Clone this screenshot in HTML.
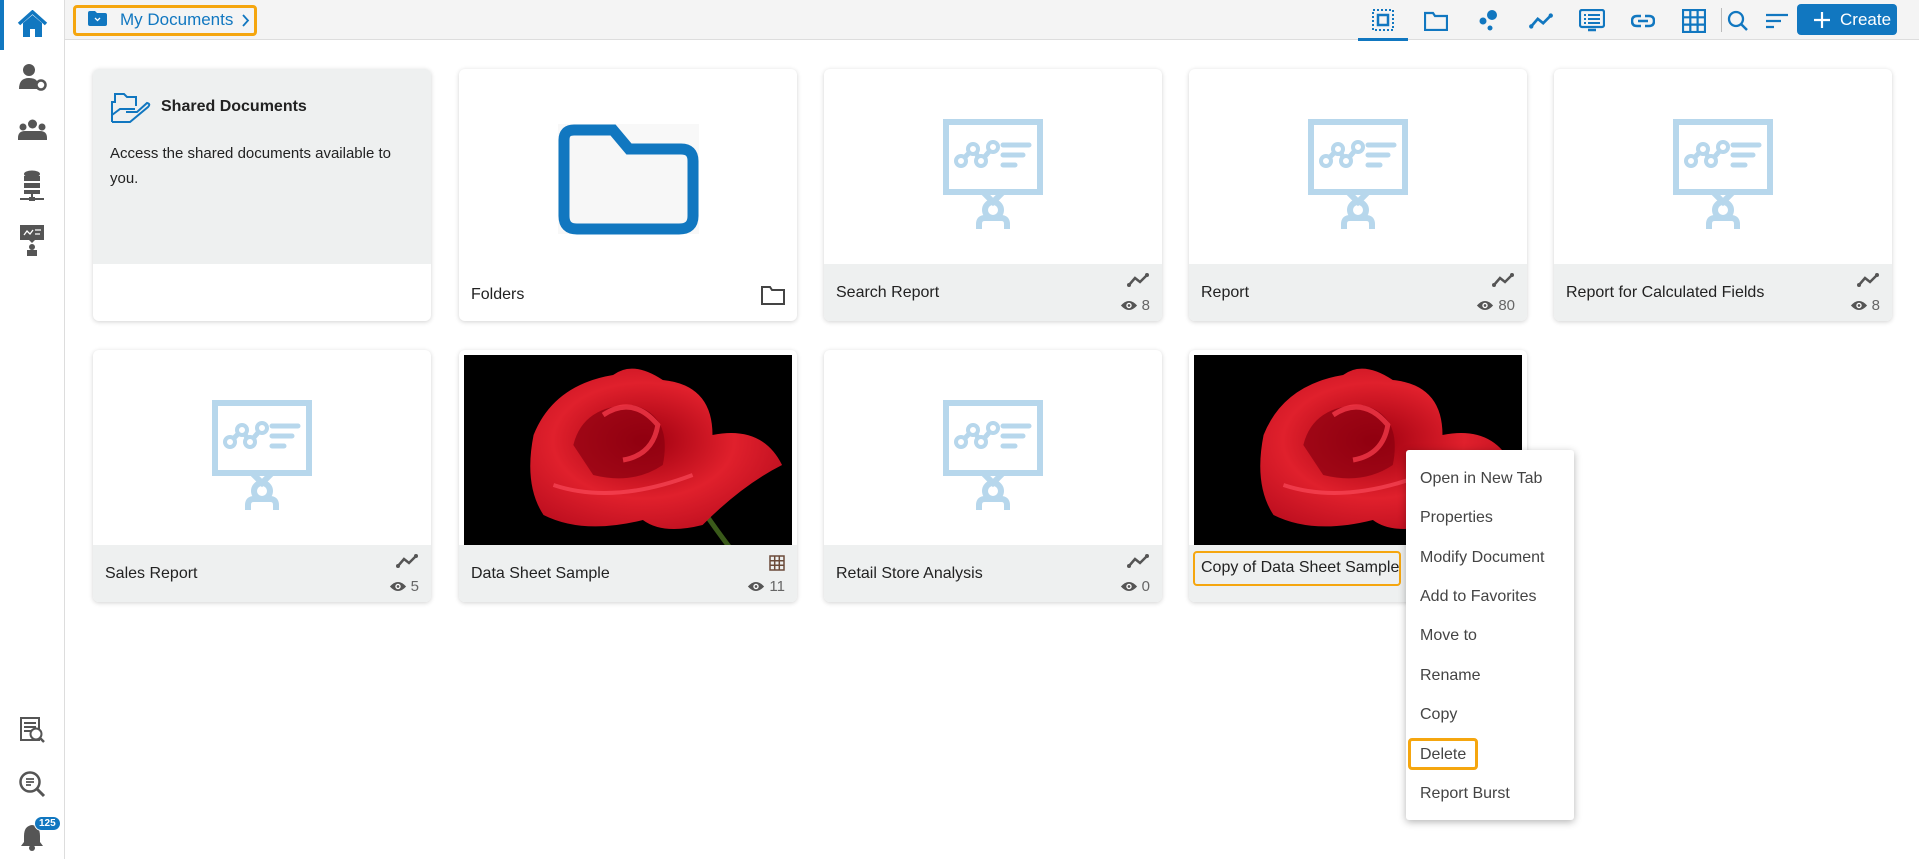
<!DOCTYPE html>
<html><head><meta charset="utf-8"><style>
*{box-sizing:border-box;margin:0;padding:0}
body{width:1919px;height:859px;background:#fff;font-family:"Liberation Sans",sans-serif;position:relative;overflow:hidden;color:#222}
.side{position:absolute;left:0;top:0;width:65px;height:859px;border-right:1px solid #ddd;background:#fff}
.top{position:absolute;left:65px;top:0;right:0;height:40px;background:#f4f4f4;border-bottom:1px solid #ddd}
.card{position:absolute;width:338px;height:252px;background:#fff;border-radius:6px;box-shadow:0 1px 5px rgba(0,0,0,.18);overflow:hidden}
.foot{position:absolute;left:0;right:0;bottom:0;height:57px;background:#eef0f0}
.title{position:absolute;left:12px;top:20px;font-size:16px;color:#222}
.ic{position:absolute;right:12px;top:8px}
.views{position:absolute;right:12px;top:33px;font-size:15px;color:#666;display:flex;align-items:center;gap:4px}
.rep{position:absolute;left:50%;top:50px;margin-left:-50px}
.menu{position:absolute;left:1406px;top:450px;width:168px;height:370px;background:#fff;border-radius:3px;box-shadow:0 2px 8px rgba(0,0,0,.3)}
.menu div{position:absolute;left:14px;font-size:16px;color:#444}
.ti{position:absolute;top:9px}
</style></head><body>
<svg width="0" height="0" style="position:absolute">
<defs>
<symbol id="rep" viewBox="0 0 100 110">
<rect x="3" y="3" width="94" height="70" fill="none" stroke="#b7d7ec" stroke-width="6"/>
<path d="M40 73 L50 83 L60 73" fill="none" stroke="#b7d7ec" stroke-width="6"/>
<circle cx="50" cy="91" r="8" fill="none" stroke="#b7d7ec" stroke-width="6"/>
<path d="M36 110 V105 Q36 99 42 99 H58 Q64 99 64 105 V110" fill="none" stroke="#b7d7ec" stroke-width="6"/>
<path d="M18 42 L30 30 L38 42 L50 28" fill="none" stroke="#b7d7ec" stroke-width="5"/>
<circle cx="18" cy="42" r="5" fill="#fff" stroke="#b7d7ec" stroke-width="4"/>
<circle cx="30" cy="30" r="5" fill="#fff" stroke="#b7d7ec" stroke-width="4"/>
<circle cx="38" cy="42" r="5" fill="#fff" stroke="#b7d7ec" stroke-width="4"/>
<circle cx="50" cy="28" r="5" fill="#fff" stroke="#b7d7ec" stroke-width="4"/>
<path d="M60 26 H86 M60 36 H80 M60 46 H72" stroke="#b7d7ec" stroke-width="5" stroke-linecap="round"/>
</symbol>
<symbol id="trend" viewBox="0 0 24 16"><path d="M3 13 L9 6 L14 10 L21 3" fill="none" stroke="#555" stroke-width="2.5"/><circle cx="3" cy="13" r="2" fill="#555"/><circle cx="21" cy="3" r="2" fill="#555"/></symbol>
<symbol id="eye" viewBox="0 0 20 14"><path d="M1 7 Q10 -3 19 7 Q10 17 1 7Z" fill="#555"/><circle cx="10" cy="7" r="3" fill="#fff"/><circle cx="10" cy="7" r="1.5" fill="#555"/></symbol>
<symbol id="rose" viewBox="0 0 330 196">
<rect width="330" height="196" fill="#000"/>
<defs><radialGradient id="rg" cx="45%" cy="45%" r="60%"><stop offset="0" stop-color="#a00010"/><stop offset=".6" stop-color="#e0202c"/><stop offset="1" stop-color="#c01020"/></radialGradient></defs>
<path d="M230 140 Q250 170 270 196" stroke="#3a5a1a" stroke-width="5" fill="none"/>
<path d="M70 80 Q90 30 150 20 Q170 5 200 25 Q250 30 250 80 Q300 70 320 110 Q280 130 240 170 Q200 180 180 165 Q120 180 80 160 Q60 130 70 80Z" fill="url(#rg)"/>
<path d="M110 90 Q120 50 170 50 Q210 60 200 110 Q170 130 130 120Z" fill="#8a0010" opacity=".7"/>
<path d="M140 60 Q170 40 195 70 Q190 100 160 105" fill="none" stroke="#ff4050" stroke-width="5" opacity=".7"/>
<path d="M90 130 Q150 150 230 120" fill="none" stroke="#ff5060" stroke-width="4" opacity=".6"/>
</symbol>
</defs></svg>

<div class="side">
<div style="position:absolute;left:0;top:0;width:4px;height:50px;background:#1177c0"></div>
<svg style="position:absolute;left:17px;top:10px" width="31" height="28" viewBox="0 0 31 28"><path d="M2 14 L15.5 2 L29 14" fill="none" stroke="#1177c0" stroke-width="3.5"/><path d="M6 13 V27 H13 V19 H18 V27 H25 V13 L15.5 5Z" fill="#1177c0"/></svg>
<svg style="position:absolute;left:18px;top:63px" width="29" height="28" viewBox="0 0 29 28"><circle cx="11" cy="7" r="6" fill="#555"/><path d="M1 26 Q1 15 11 15 Q17 15 19 18 L19 26Z" fill="#555"/><circle cx="23" cy="22" r="4.5" fill="none" stroke="#555" stroke-width="2.5"/></svg>
<svg style="position:absolute;left:17px;top:119px" width="31" height="22" viewBox="0 0 31 22"><circle cx="15.5" cy="5" r="4.5" fill="#555"/><circle cx="6" cy="8" r="3.5" fill="#555"/><circle cx="25" cy="8" r="3.5" fill="#555"/><path d="M1 19 Q1 12 8 12 H23 Q30 12 30 19 V21 H1Z" fill="#555"/></svg>
<svg style="position:absolute;left:19px;top:170px" width="26" height="33" viewBox="0 0 26 33"><ellipse cx="13" cy="4" rx="8" ry="3.5" fill="#555"/><rect x="5" y="6" width="16" height="5" fill="#555"/><rect x="5" y="13" width="16" height="5" fill="#555"/><rect x="5" y="20" width="16" height="4" fill="#555"/><path d="M13 24 V29 M1 29 H25" stroke="#555" stroke-width="2"/><rect x="10" y="27" width="6" height="4" fill="#555"/></svg>
<svg style="position:absolute;left:19px;top:225px" width="26" height="31" viewBox="0 0 26 31"><rect x="1" y="0" width="24" height="15" fill="#555"/><path d="M5 10 L8 6 L11 9 L14 5 M16 5 H22 M16 9 H21" stroke="#fff" stroke-width="1.3" fill="none"/><path d="M10 15 L13 18 L16 15" fill="#555"/><circle cx="13" cy="22" r="3" fill="#555"/><rect x="8" y="25" width="10" height="6" fill="#555"/></svg>
<svg style="position:absolute;left:19px;top:717px" width="27" height="27" viewBox="0 0 27 27"><rect x="2" y="1" width="18" height="22" fill="none" stroke="#555" stroke-width="2"/><path d="M5 6 H17 M5 10 H17 M5 14 H12" stroke="#555" stroke-width="2"/><circle cx="17" cy="17" r="5.5" fill="#fff" stroke="#555" stroke-width="2"/><path d="M21 21 L25 25" stroke="#555" stroke-width="2.5"/></svg>
<svg style="position:absolute;left:18px;top:770px" width="28" height="28" viewBox="0 0 28 28"><circle cx="12" cy="12" r="9.5" fill="none" stroke="#555" stroke-width="2.5"/><path d="M19 19 L26 26" stroke="#555" stroke-width="3"/><path d="M8 9 H16 M8 12 H16 M8 15 H13" stroke="#555" stroke-width="1.8"/></svg>
<svg style="position:absolute;left:19px;top:823px" width="26" height="28" viewBox="0 0 26 28"><path d="M13 2 Q5 3 5 13 V19 L2 23 H24 L21 19 V13 Q21 3 13 2Z" fill="#555"/><circle cx="13" cy="25" r="3" fill="#555"/></svg>
<div style="position:absolute;left:34px;top:816px;background:#1177c0;color:#fff;font-size:10px;font-weight:bold;border-radius:8px;padding:1px 4px;border:1px solid #fff">125</div>
</div>

<div class="top">
<div style="position:absolute;left:8px;top:5px;width:184px;height:31px;border:3px solid #f5a60f;border-radius:4px"></div>
<svg style="position:absolute;left:23px;top:11px" width="19" height="15" viewBox="0 0 19 15"><path d="M0 2 Q0 0 2 0 H7 L9 2 H17 Q19 2 19 4 V13 Q19 15 17 15 H2 Q0 15 0 13Z" fill="#1177c0"/><path d="M7 7 L9.5 9.5 L12 7" stroke="#fff" stroke-width="1.3" fill="none"/></svg>
<div style="position:absolute;left:55px;top:10px;font-size:17px;color:#1177c0">My Documents</div>
<svg style="position:absolute;left:177px;top:14px" width="8" height="13" viewBox="0 0 8 13"><path d="M1 1 L6 6.5 L1 12" stroke="#1177c0" stroke-width="1.8" fill="none"/></svg>

<div style="position:absolute;left:1293px;top:38px;width:50px;height:3px;background:#1177c0"></div>
<svg class="ti" style="left:1307px" width="22" height="22" viewBox="0 0 22 22"><rect x="1" y="1" width="20" height="20" fill="none" stroke="#1177c0" stroke-width="2" stroke-dasharray="2 2"/><rect x="6" y="6" width="10" height="10" fill="none" stroke="#1177c0" stroke-width="2.5"/></svg>
<svg class="ti" style="left:1359px;top:11px" width="24" height="20" viewBox="0 0 24 20"><path d="M1 2 H9 L11 5 H23 V19 H1Z" fill="none" stroke="#1177c0" stroke-width="2.2"/></svg>
<svg class="ti" style="left:1413px" width="22" height="22" viewBox="0 0 22 22"><circle cx="14" cy="6" r="5" fill="#1177c0"/><circle cx="5" cy="12" r="3.5" fill="#1177c0"/><circle cx="12" cy="19" r="2.5" fill="#1177c0"/></svg>
<svg class="ti" style="left:1463px;top:12px" width="26" height="18" viewBox="0 0 24 16"><path d="M3 13 L9 6 L14 10 L21 3" fill="none" stroke="#1177c0" stroke-width="2.5"/><circle cx="3" cy="13" r="2" fill="#1177c0"/><circle cx="21" cy="3" r="2" fill="#1177c0"/></svg>
<svg class="ti" style="left:1514px" width="26" height="23" viewBox="0 0 26 23"><rect x="1" y="1" width="24" height="17" rx="2" fill="none" stroke="#1177c0" stroke-width="2.2"/><path d="M5 6 H7 M9 6 H21 M5 10 H7 M9 10 H21 M5 14 H7 M9 14 H21" stroke="#1177c0" stroke-width="2"/><path d="M9 21 H17" stroke="#1177c0" stroke-width="2.5"/></svg>
<svg class="ti" style="left:1566px;top:14px" width="24" height="14" viewBox="0 0 24 14"><path d="M10 2 H6 Q1 2 1 7 Q1 12 6 12 H10 M14 2 H18 Q23 2 23 7 Q23 12 18 12 H14 M7 7 H17" fill="none" stroke="#1177c0" stroke-width="2.5"/></svg>
<svg class="ti" style="left:1617px" width="24" height="24" viewBox="0 0 24 24"><rect x="1" y="1" width="22" height="22" fill="none" stroke="#1177c0" stroke-width="2.2"/><path d="M8.3 1 V23 M15.6 1 V23 M1 8.3 H23 M1 15.6 H23" stroke="#1177c0" stroke-width="2.2"/></svg>
<div style="position:absolute;left:1656px;top:8px;width:1px;height:24px;background:#bbb"></div>
<svg class="ti" style="left:1662px;top:10px" width="22" height="22" viewBox="0 0 22 22"><circle cx="9" cy="9" r="7" fill="none" stroke="#1177c0" stroke-width="2.3"/><path d="M14 14 L20 20" stroke="#1177c0" stroke-width="2.5"/></svg>
<svg class="ti" style="left:1701px;top:13px" width="22" height="16" viewBox="0 0 22 16"><path d="M0 2 H22 M0 8 H15 M0 14 H8" stroke="#1177c0" stroke-width="2.2"/></svg>
<div style="position:absolute;left:1732px;top:4px;width:100px;height:31px;background:#1177c0;border-radius:4px;color:#fff;font-size:17px;line-height:31px">
<svg style="position:absolute;left:17px;top:8px" width="16" height="16" viewBox="0 0 16 16"><path d="M8 0 V16 M0 8 H16" stroke="#fff" stroke-width="2.2"/></svg>
<span style="position:absolute;left:43px">Create</span></div>
</div>

<!-- row 1 -->
<div class="card" style="left:93px;top:69px">
<div style="position:absolute;left:0;top:0;right:0;height:195px;background:#eef0f0"></div>
<svg style="position:absolute;left:17px;top:23px" width="42" height="33" viewBox="0 0 42 33"><path d="M2 30 V10 H5 V2 H14 L17 5 H26 V14" fill="none" stroke="#1177c0" stroke-width="2"/><path d="M2 30 H20 L38 15 Q41 12 37 11 L27 20 H16 M2 23 L10 17 H25" fill="none" stroke="#1177c0" stroke-width="2"/></svg>
<div style="position:absolute;left:68px;top:29px;font-size:16px;font-weight:bold;color:#222">Shared Documents</div>
<div style="position:absolute;left:17px;top:72px;width:290px;font-size:15px;line-height:25px;color:#222">Access the shared documents available to you.</div>
</div>
<div class="card" style="left:459px;top:69px">
<div style="position:absolute;left:99px;top:55px;width:141px;height:110px;background:#f8f8f8"></div>
<svg style="position:absolute;left:98px;top:55px" width="144" height="112" viewBox="0 0 144 112"><path d="M17 6 H56 L72 25 H124 Q136 25 136 37 V92 Q136 105 122 105 H20 Q7 105 7 92 V16 Q7 6 17 6Z" fill="#f7f7f7" stroke="#1177c0" stroke-width="11"/></svg>
<div class="title" style="top:217px">Folders</div>
<svg style="position:absolute;right:12px;top:216px" width="24" height="20" viewBox="0 0 24 20"><path d="M1 2 H9 L11 5 H23 V19 H1Z" fill="none" stroke="#444" stroke-width="2"/></svg>
</div>
<div class="card" style="left:824px;top:69px">
<svg class="rep" width="100" height="110"><use href="#rep"/></svg>
<div class="foot"><div class="title">Search Report</div><svg class="ic" width="24" height="16"><use href="#trend"/></svg><div class="views"><svg width="18" height="13"><use href="#eye"/></svg>8</div></div>
</div>
<div class="card" style="left:1189px;top:69px">
<svg class="rep" width="100" height="110"><use href="#rep"/></svg>
<div class="foot"><div class="title">Report</div><svg class="ic" width="24" height="16"><use href="#trend"/></svg><div class="views"><svg width="18" height="13"><use href="#eye"/></svg>80</div></div>
</div>
<div class="card" style="left:1554px;top:69px">
<svg class="rep" width="100" height="110"><use href="#rep"/></svg>
<div class="foot"><div class="title">Report for Calculated Fields</div><svg class="ic" width="24" height="16"><use href="#trend"/></svg><div class="views"><svg width="18" height="13"><use href="#eye"/></svg>8</div></div>
</div>

<!-- row 2 -->
<div class="card" style="left:93px;top:350px">
<svg class="rep" width="100" height="110"><use href="#rep"/></svg>
<div class="foot"><div class="title">Sales Report</div><svg class="ic" width="24" height="16"><use href="#trend"/></svg><div class="views"><svg width="18" height="13"><use href="#eye"/></svg>5</div></div>
</div>
<div class="card" style="left:459px;top:350px">
<svg style="position:absolute;left:5px;top:5px" width="328" height="196" viewBox="0 0 330 196" preserveAspectRatio="none"><use href="#rose"/></svg>
<div class="foot"><div class="title">Data Sheet Sample</div>
<svg class="ic" style="top:10px" width="16" height="16" viewBox="0 0 16 16"><rect x="1" y="1" width="14" height="14" fill="none" stroke="#6b4b3a" stroke-width="1.5"/><path d="M5.7 1 V15 M10.3 1 V15 M1 5.7 H15 M1 10.3 H15" stroke="#6b4b3a" stroke-width="1.5"/></svg>
<div class="views"><svg width="18" height="13"><use href="#eye"/></svg>11</div></div>
</div>
<div class="card" style="left:824px;top:350px">
<svg class="rep" width="100" height="110"><use href="#rep"/></svg>
<div class="foot"><div class="title">Retail Store Analysis</div><svg class="ic" width="24" height="16"><use href="#trend"/></svg><div class="views"><svg width="18" height="13"><use href="#eye"/></svg>0</div></div>
</div>
<div class="card" style="left:1189px;top:350px">
<svg style="position:absolute;left:5px;top:5px" width="328" height="196" viewBox="0 0 330 196" preserveAspectRatio="none"><use href="#rose"/></svg>
<div class="foot"><div style="position:absolute;left:4px;top:6px;width:208px;height:35px;border:2px solid #f5a60f;border-radius:4px"></div><div class="title" style="left:12px;top:14px">Copy of Data Sheet Sample</div></div>
</div>

<div class="menu">
<div style="top:20px">Open in New Tab</div>
<div style="top:59px">Properties</div>
<div style="top:99px">Modify Document</div>
<div style="top:138px">Add to Favorites</div>
<div style="top:177px">Move to</div>
<div style="top:217px">Rename</div>
<div style="top:256px">Copy</div>
<div style="left:2px;top:288px;width:70px;height:32px;border:3px solid #f5a60f;border-radius:4px"></div>
<div style="top:296px">Delete</div>
<div style="top:335px">Report Burst</div>
</div>
</body></html>
